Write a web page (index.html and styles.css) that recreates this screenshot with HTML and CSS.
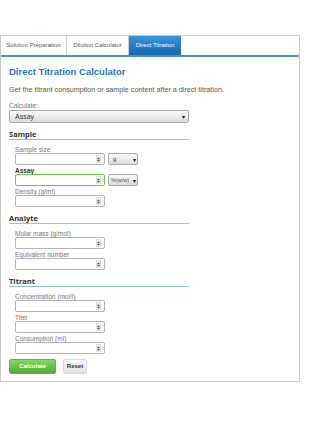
FILE: index.html
```html
<!DOCTYPE html>
<html>
<head>
<meta charset="utf-8">
<link rel="stylesheet" href="styles.css">
</head>
<body>
<div class="panel">
  <div class="tabs">
    <div class="tab t1">Solution Preparation</div>
    <div class="tab t2">Dilution Calculator</div>
    <div class="tab t3 active">Direct Titration</div>
  </div>
  <div class="content">
    <h1 class="title">Direct Titration Calculator</h1>
    <p class="intro">Get the titrant consumption or sample content after a direct titration.</p>
    <div class="label">Calculate:</div>
    <div class="select wide"><span>Assay</span><span class="arrow">&#9662;</span></div>

    <div class="section">
      <h2 class="shead">Sample</h2>
      <div class="fields">
        <div class="group">
          <div class="label">Sample size</div>
          <div class="row">
            <div class="input"><span class="spin"><svg width="4" height="7" viewBox="0 0 4 7"><path d="M0 3 L2 0.5 L4 3 Z M0 4 L2 6.5 L4 4 Z" fill="#555"/></svg></span></div>
            <div class="select unit"><span>g</span><span class="arrow">&#9662;</span></div>
          </div>
        </div>
        <div class="group">
          <div class="label bold">Assay</div>
          <div class="row">
            <div class="input active"><span class="spin"><svg width="4" height="7" viewBox="0 0 4 7"><path d="M0 3 L2 0.5 L4 3 Z M0 4 L2 6.5 L4 4 Z" fill="#555"/></svg></span></div>
            <div class="select unit"><span class="small">%(w/w)</span><span class="arrow">&#9662;</span></div>
          </div>
        </div>
        <div class="group">
          <div class="label">Density (g/ml)</div>
          <div class="input"><span class="spin"><svg width="4" height="7" viewBox="0 0 4 7"><path d="M0 3 L2 0.5 L4 3 Z M0 4 L2 6.5 L4 4 Z" fill="#555"/></svg></span></div>
        </div>
      </div>
    </div>

    <div class="section">
      <h2 class="shead">Analyte</h2>
      <div class="fields">
        <div class="group">
          <div class="label">Molar mass (g/mol)</div>
          <div class="input"><span class="spin"><svg width="4" height="7" viewBox="0 0 4 7"><path d="M0 3 L2 0.5 L4 3 Z M0 4 L2 6.5 L4 4 Z" fill="#555"/></svg></span></div>
        </div>
        <div class="group">
          <div class="label">Equivalent number</div>
          <div class="input"><span class="spin"><svg width="4" height="7" viewBox="0 0 4 7"><path d="M0 3 L2 0.5 L4 3 Z M0 4 L2 6.5 L4 4 Z" fill="#555"/></svg></span></div>
        </div>
      </div>
    </div>

    <div class="section">
      <h2 class="shead">Titrant</h2>
      <div class="fields">
        <div class="group">
          <div class="label">Concentration (mol/l)</div>
          <div class="input"><span class="spin"><svg width="4" height="7" viewBox="0 0 4 7"><path d="M0 3 L2 0.5 L4 3 Z M0 4 L2 6.5 L4 4 Z" fill="#555"/></svg></span></div>
        </div>
        <div class="group">
          <div class="label">Titer</div>
          <div class="input"><span class="spin"><svg width="4" height="7" viewBox="0 0 4 7"><path d="M0 3 L2 0.5 L4 3 Z M0 4 L2 6.5 L4 4 Z" fill="#555"/></svg></span></div>
        </div>
        <div class="group">
          <div class="label">Consumption (ml)</div>
          <div class="input"><span class="spin"><svg width="4" height="7" viewBox="0 0 4 7"><path d="M0 3 L2 0.5 L4 3 Z M0 4 L2 6.5 L4 4 Z" fill="#555"/></svg></span></div>
        </div>
      </div>
    </div>

    <div class="buttons">
      <div class="btn calc">Calculate</div>
      <div class="btn reset">Reset</div>
    </div>
  </div>
</div>
</body>
</html>
```

FILE: styles.css
```css
html, body {
  margin: 0;
  padding: 0;
  background: #fff;
}
body {
  font-family: "Liberation Sans", Arial, sans-serif;
  color: #444;
}
.panel {
  margin-top: 35px;
  width: 300px;
  box-sizing: border-box;
  border: 1px solid #c8c8c8;
  padding-bottom: 7px;
}
.tabs {
  display: flex;
  height: 19px;
  border-bottom: 2px solid #4a92cf;
}
.tab {
  box-sizing: border-box;
  font-size: 6px;
  line-height: 19px;
  color: #555;
  text-align: center;
  border-right: 1px solid #d0d0d0;
}
.t1 { width: 66px; }
.t2 { width: 62px; }
.t3 { width: 52px; border-right: none; }
.tab.active {
  background: linear-gradient(#3b94dc, #1667ad);
  color: #fff;
}
.content {
  padding: 0 8px;
}
.title {
  margin: 9px 0 0;
  font-size: 9.5px;
  line-height: 12px;
  font-weight: bold;
  color: #1d78c1;
}
.intro {
  margin: 7px 0 0;
  font-size: 7.2px;
  line-height: 10px;
  color: #555;
}
.label {
  font-size: 6.5px;
  line-height: 7px;
  color: #777;
}
.content > .label {
  margin-top: 7px;
  line-height: 8px;
}
.label.bold {
  font-weight: bold;
  color: #333;
}
.select {
  box-sizing: border-box;
  height: 13px;
  display: flex;
  align-items: center;
  justify-content: space-between;
  padding: 0 3px 0 5px;
  border: 1px solid #a8a8a8;
  border-radius: 2px;
  background: linear-gradient(#fafafa, #dcdcdc);
  font-size: 7px;
  color: #333;
}
.select.wide { width: 180px; }
.select.unit {
  width: 30px;
  height: 12px;
  margin-left: 3px;
  padding: 0 1px 0 4px;
  font-size: 6px;
}
.select .small { font-size: 5.5px; margin-left: -2px; color: #555; }
.arrow {
  font-size: 6px;
  color: #111;
}
.section {
  width: 180px;
  margin-top: 7px;
}
.shead {
  margin: 0;
  font-family: "Open Sans", "Liberation Sans", sans-serif;
  font-size: 7.5px;
  line-height: 9px;
  font-weight: bold;
  color: #333;
  border-bottom: 1px solid #8ec4ea;
}
.fields {
  padding: 6px 0 0 6px;
}
.group {
  margin-bottom: 2px;
}
.row {
  display: flex;
}
.input {
  box-sizing: border-box;
  width: 90px;
  height: 12px;
  border: 1px solid #b4b4b4;
  border-radius: 2px;
  background: #fff;
  display: flex;
  align-items: center;
  justify-content: flex-end;
  padding-right: 3px;
}
.input.active {
  border-color: #6cc644;
}
.spin {
  display: flex;
  align-items: center;
  justify-content: center;
  width: 5px;
  height: 8px;
  background: #f0f0f0;
  border: 1px solid #ddd;
  box-sizing: border-box;
}
.spin svg { display: block; }
.buttons {
  display: flex;
  gap: 7px;
  margin-top: 5px;
}
.btn {
  box-sizing: border-box;
  height: 15px;
  line-height: 13px;
  font-size: 6px;
  font-weight: bold;
  text-align: center;
  border-radius: 2px;
}
.calc {
  width: 47px;
  color: #fff;
  background: linear-gradient(#84d861, #4eae30);
  border: 1px solid #5db83c;
}
.reset {
  width: 24px;
  color: #333;
  background: linear-gradient(#fafafa, #e0e0e0);
  border: 1px solid #d8d8d8;
}
```
